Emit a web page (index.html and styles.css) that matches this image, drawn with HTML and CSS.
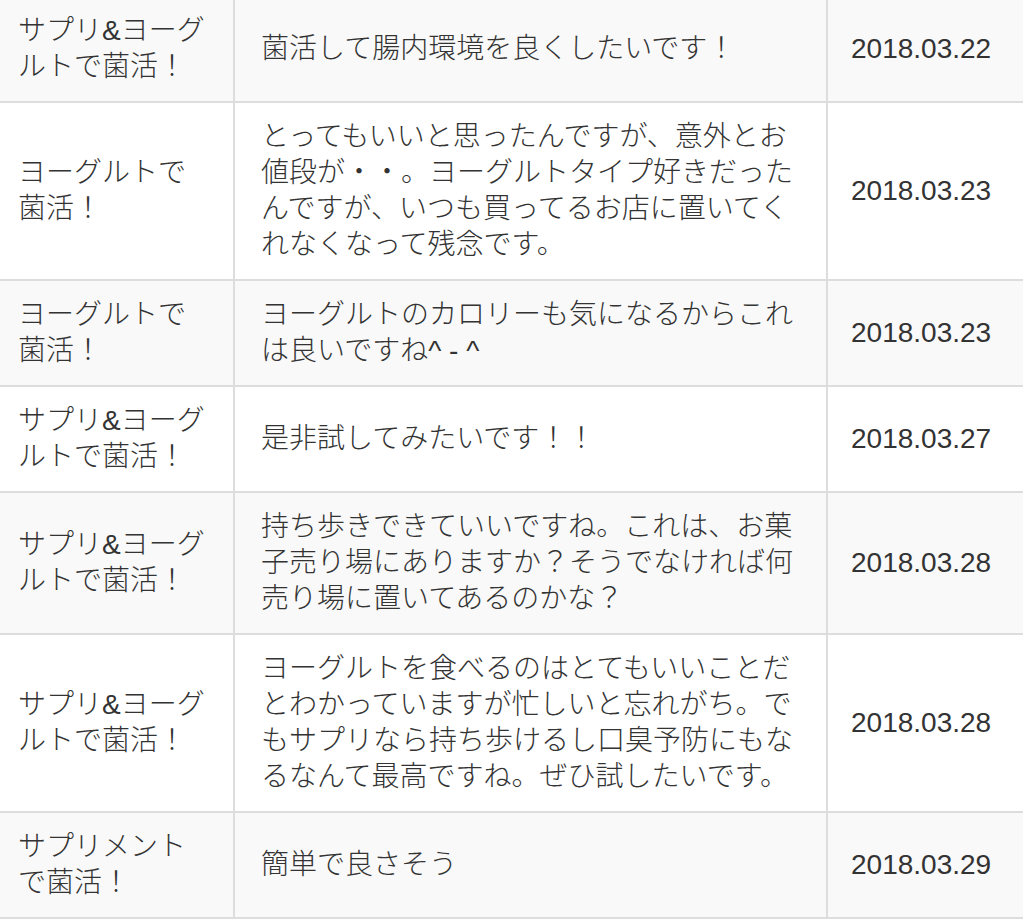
FILE: index.html
```html
<!DOCTYPE html>
<html lang="ja">
<head>
<meta charset="utf-8">
<title>菌活コメント</title>
<link rel="stylesheet" href="styles.css">
</head>
<body>
<table class="comments">
  <colgroup>
    <col class="col-theme">
    <col class="col-body">
    <col class="col-date">
  </colgroup>
  <tbody>
    <tr>
      <td>サプリ&amp;ヨーグルトで菌活！</td>
      <td>菌活して腸内環境を良くしたいです！</td>
      <td class="date">2018.03.22</td>
    </tr>
    <tr>
      <td>ヨーグルトで菌活！</td>
      <td>とってもいいと思ったんですが、意外とお値段が・・。ヨーグルトタイプ好きだったんですが、いつも買ってるお店に置いてくれなくなって残念です。</td>
      <td class="date">2018.03.23</td>
    </tr>
    <tr>
      <td>ヨーグルトで菌活！</td>
      <td>ヨーグルトのカロリーも気になるからこれは良いですね^ - ^</td>
      <td class="date">2018.03.23</td>
    </tr>
    <tr>
      <td>サプリ&amp;ヨーグルトで菌活！</td>
      <td>是非試してみたいです！！</td>
      <td class="date">2018.03.27</td>
    </tr>
    <tr>
      <td>サプリ&amp;ヨーグルトで菌活！</td>
      <td>持ち歩きできていいですね。これは、お菓子売り場にありますか？そうでなければ何売り場に置いてあるのかな？</td>
      <td class="date">2018.03.28</td>
    </tr>
    <tr>
      <td>サプリ&amp;ヨーグルトで菌活！</td>
      <td>ヨーグルトを食べるのはとてもいいことだとわかっていますが忙しいと忘れがち。でもサプリなら持ち歩けるし口臭予防にもなるなんて最高ですね。ぜひ試したいです。</td>
      <td class="date">2018.03.28</td>
    </tr>
    <tr>
      <td>サプリメントで菌活！</td>
      <td>簡単で良さそう</td>
      <td class="date">2018.03.29</td>
    </tr>
  </tbody>
</table>
</body>
</html>
```

FILE: styles.css
```css
html, body {
  margin: 0;
  padding: 0;
  background: #fff;
}

body {
  overflow: hidden;
}

.comments {
  table-layout: fixed;
  border-collapse: collapse;
  width: 1039px;
  margin: -3px 0 0 -8px;
  font-family: "Liberation Sans", "Noto Sans CJK JP", sans-serif;
  font-size: 28px;
  font-weight: 300;
  line-height: 36px;
  color: #333;
}

.col-theme { width: 242px; }
.col-body { width: 593px; }
.col-date { width: 204px; }

.comments td {
  padding: 16px 26px;
  vertical-align: middle;
  border: 2px solid #ddd;
  word-break: break-all;
}

.comments tr:first-child td {
  border-top: none;
}

.comments td:first-child {
  border-left: none;
}

.comments tr:nth-child(odd) td {
  background: #f9f9f9;
}

.comments .date {
  padding-left: 23px;
  white-space: nowrap;
}
```
